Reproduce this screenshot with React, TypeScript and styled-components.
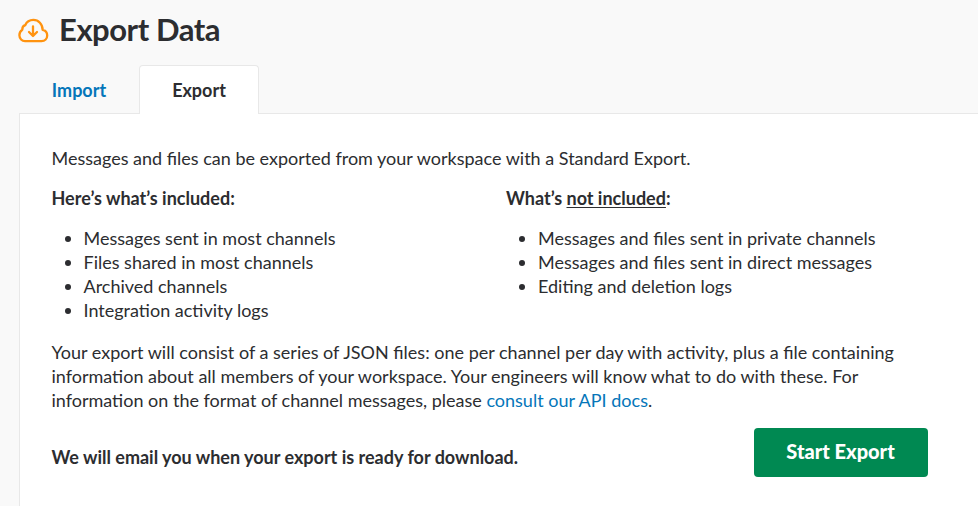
import styled, { createGlobalStyle } from "styled-components";

const GlobalStyle = createGlobalStyle`
  html, body {
    margin: 0;
    padding: 0;
    background: #f9f9f9;
  }
  body {
    font-family: Lato, "Liberation Sans", sans-serif;
    color: #2c2d30;
    overflow: hidden;
  }
`;

const Page = styled.div`
  width: 978px;
  height: 506px;
  overflow: hidden;
`;

const Header = styled.header`
  display: flex;
  align-items: center;
  gap: 9px;
  height: 65px;
  padding: 0 0 6px 18px;
  box-sizing: border-box;
`;

const Title = styled.h1`
  margin: 0;
  font-size: 31px;
  line-height: 59px;
  font-weight: 700;
  letter-spacing: -0.45px;
  color: #2c2d30;
`;

const Tabs = styled.nav`
  display: flex;
  height: 49px;
  padding-left: 19px;
`;

const Tab = styled.a<{ $active?: boolean }>`
  width: 120px;
  box-sizing: border-box;
  display: flex;
  align-items: center;
  justify-content: center;
  padding-top: ${(p) => (p.$active ? "0" : "2px")};
  font-size: 18px;
  font-weight: 700;
  color: ${(p) => (p.$active ? "#2c2d30" : "#0576b9")};
  background: ${(p) => (p.$active ? "#fff" : "transparent")};
  border: ${(p) => (p.$active ? "1px solid #e8e8e8" : "none")};
  border-bottom: none;
  border-radius: 4px 4px 0 0;
  height: ${(p) => (p.$active ? "49px" : "48px")};
  position: relative;
  z-index: 1;
`;

const Card = styled.section`
  margin: -1px 0 0 19px;
  background: #fff;
  border: 1px solid #e8e8e8;
  border-right: none;
  height: 400px;
  padding: 32px 50px 0 31.5px;
  font-size: 18px;
  line-height: 24px;
`;

const Intro = styled.p`
  margin: 0 0 16px;
`;

const Columns = styled.div`
  display: grid;
  grid-template-columns: 454.5px 1fr;
`;

const Heading = styled.p`
  margin: 0;
  font-weight: 700;
  u {
    text-underline-offset: 2px;
  }
`;

const List = styled.ul`
  margin: 16px 0 18px;
  padding: 0 0 0 32px;
`;

const Body = styled.p`
  margin: 0 0 16px;
`;

const DocLink = styled.a`
  color: #0576b9;
`;

const Footer = styled.div`
  display: flex;
  align-items: center;
  justify-content: space-between;
  padding-right: 0.5px;
`;

const Notice = styled.strong`
  font-weight: 700;
  margin-top: 8px;
`;

const Button = styled.button`
  width: 174px;
  height: 49px;
  padding: 0 0 3px;
  border: none;
  border-radius: 4px;
  background: #008952;
  color: #fff;
  font-family: inherit;
  font-size: 20px;
  font-weight: 900;
`;

const CloudIcon = () => (
  <svg width="32" height="28" viewBox="0 0 32 28" fill="none" stroke="#ff9310" strokeWidth="2.3" strokeLinecap="round" strokeLinejoin="round">
    <path d="M7 25.100H23.500C27 25.100 29.200 22.500 29.200 19.500C29.200 16.500 27.200 14.300 24.600 13.800C24.600 8 20.500 3.900 15.300 3.900C11.800 3.900 8.600 6 7.200 9.200C5.300 9.800 4.200 11.600 4.300 13.800C2.400 15 1.400 17 1.400 19.300C1.400 22.600 4 25.100 7 25.100Z" />
    <path d="M15 10.500V20M11 16L15 20L19 16" />
  </svg>
);

function App() {
  return (
    <Page>
      <GlobalStyle />
      <Header>
        <CloudIcon />
        <Title>Export Data</Title>
      </Header>
      <Tabs>
        <Tab>Import</Tab>
        <Tab $active>Export</Tab>
      </Tabs>
      <Card>
        <Intro>Messages and files can be exported from your workspace with a Standard Export.</Intro>
        <Columns>
          <div>
            <Heading>Here’s what’s included:</Heading>
            <List>
              <li>Messages sent in most channels</li>
              <li>Files shared in most channels</li>
              <li>Archived channels</li>
              <li>Integration activity logs</li>
            </List>
          </div>
          <div>
            <Heading>
              What’s <u>not included</u>:
            </Heading>
            <List>
              <li>Messages and files sent in private channels</li>
              <li>Messages and files sent in direct messages</li>
              <li>Editing and deletion logs</li>
            </List>
          </div>
        </Columns>
        <Body>
          Your export will consist of a series of JSON files: one per channel per day with activity, plus a file containing
          information about all members of your workspace. Your engineers will know what to do with these. For
          information on the format of channel messages, please <DocLink>consult our API docs</DocLink>.
        </Body>
        <Footer>
          <Notice>We will email you when your export is ready for download.</Notice>
          <Button>Start Export</Button>
        </Footer>
      </Card>
    </Page>
  );
}

export default App;
